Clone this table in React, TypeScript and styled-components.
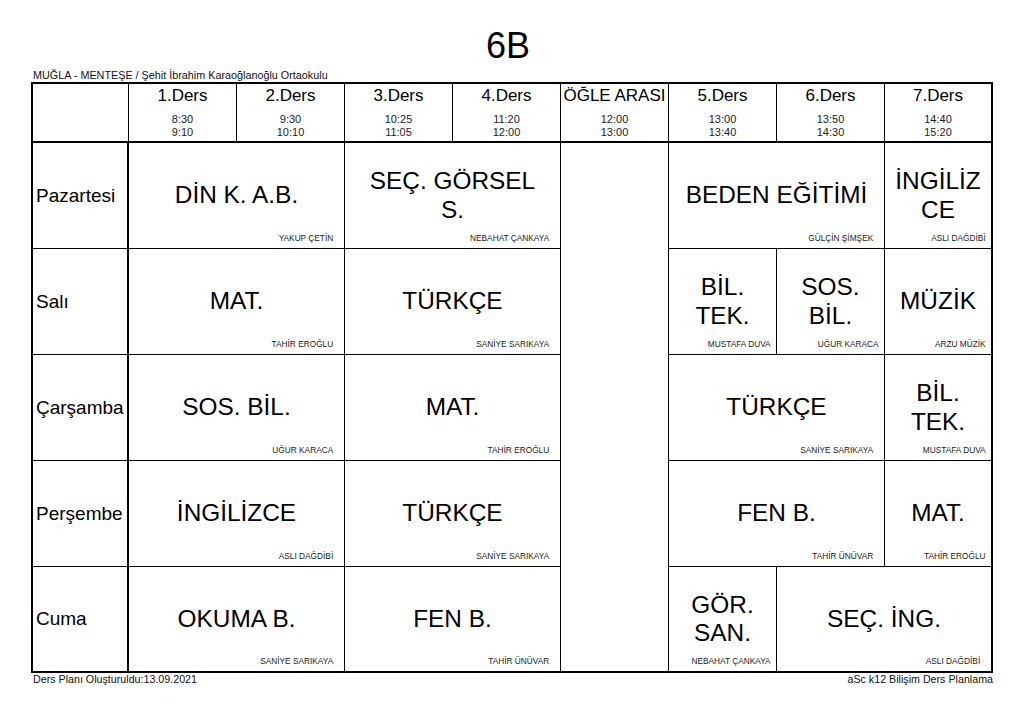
import React from "react";
import styled, { createGlobalStyle } from "styled-components";

const GlobalStyle = createGlobalStyle`
  html, body {
    margin: 0;
    padding: 0;
    background: #ffffff;
  }
  body {
    font-family: "Liberation Sans", Arial, sans-serif;
    color: #000;
  }
  * { box-sizing: border-box; }
`;

const Page = styled.div`
  width: 1024px;
  height: 722px;
  padding: 26px 0 0 31px;
`;

const Sheet = styled.div`
  width: 962px;
`;

const Title = styled.h1`
  margin: 0;
  padding-right: 8px;
  text-align: center;
  font-size: 36px;
  font-weight: 400;
  line-height: 40px;
  color: #000;
`;

const SchoolName = styled.div`
  margin-top: 3px;
  padding-left: 2px;
  font-size: 10.8px;
  line-height: 13px;
  color: #111;
`;

const Timetable = styled.div`
  display: grid;
  grid-template-columns: 96px repeat(8, 108px);
  grid-template-rows: 59px repeat(5, 106px);
  border-top: 2px solid #000;
  border-left: 2px solid #000;
`;

const HeaderCell = styled.div<{ $edge?: boolean }>`
  display: flex;
  flex-direction: column;
  align-items: center;
  padding-top: 2px;
  border-right: ${(p) => (p.$edge ? "2px" : "1px")} solid #000;
  border-bottom: 2px solid #000;
`;

const PeriodName = styled.div`
  font-size: 17px;
  line-height: 20px;
  white-space: nowrap;
  color: #000;
`;

const PeriodTimes = styled.div`
  margin-top: 7px;
  font-size: 11px;
  line-height: 12.5px;
  text-align: center;
  color: #222;
`;

const DayCell = styled.div<{ $bottom?: boolean }>`
  display: flex;
  align-items: center;
  padding-left: 3px;
  font-size: 19px;
  color: #000;
  border-right: 2px solid #000;
  border-bottom: ${(p) => (p.$bottom ? "2px" : "1px")} solid #000;
`;

const LessonCell = styled.div<{ $edge?: boolean; $bottom?: boolean }>`
  display: grid;
  grid-template-columns: 100%;
  grid-template-rows: 100%;
  padding: 0 5%;
  border-right: ${(p) => (p.$edge ? "2px" : "1px")} solid #000;
  border-bottom: ${(p) => (p.$bottom ? "2px" : "1px")} solid #000;
`;

const Subject = styled.div`
  grid-area: 1 / 1;
  align-self: center;
  text-align: center;
  font-size: 24.4px;
  line-height: 1.15;
  overflow-wrap: anywhere;
  color: #000;
`;

const Teacher = styled.div`
  grid-area: 1 / 1;
  align-self: end;
  justify-self: end;
  margin-bottom: 5px;
  font-size: 8.3px;
  line-height: 10px;
  white-space: nowrap;
  color: #222;
`;

const LunchCell = styled.div`
  grid-column: 6;
  grid-row: 2 / span 5;
  border-right: 1px solid #000;
  border-bottom: 2px solid #000;
`;

const Footer = styled.div`
  display: flex;
  justify-content: space-between;
  padding: 0 0 0 2px;
  font-size: 10.7px;
  line-height: 13px;
  color: #111;
`;

type Lesson = { subject: string; teacher: string; period: number; span: number };
type Day = { name: string; lessons: Lesson[] };

const periods = [
  { name: "1.Ders", start: "8:30", end: "9:10" },
  { name: "2.Ders", start: "9:30", end: "10:10" },
  { name: "3.Ders", start: "10:25", end: "11:05" },
  { name: "4.Ders", start: "11:20", end: "12:00" },
  { name: "ÖĞLE ARASI", start: "12:00", end: "13:00" },
  { name: "5.Ders", start: "13:00", end: "13:40" },
  { name: "6.Ders", start: "13:50", end: "14:30" },
  { name: "7.Ders", start: "14:40", end: "15:20" },
];

const days: Day[] = [
  {
    name: "Pazartesi",
    lessons: [
      { subject: "DİN K. A.B.", teacher: "YAKUP ÇETİN", period: 1, span: 2 },
      { subject: "SEÇ. GÖRSEL S.", teacher: "NEBAHAT ÇANKAYA", period: 3, span: 2 },
      { subject: "BEDEN EĞİTİMİ", teacher: "GÜLÇİN ŞİMŞEK", period: 5, span: 2 },
      { subject: "İNGİLİZCE", teacher: "ASLI DAĞDİBİ", period: 7, span: 1 },
    ],
  },
  {
    name: "Salı",
    lessons: [
      { subject: "MAT.", teacher: "TAHİR EROĞLU", period: 1, span: 2 },
      { subject: "TÜRKÇE", teacher: "SANİYE SARIKAYA", period: 3, span: 2 },
      { subject: "BİL. TEK.", teacher: "MUSTAFA DUVA", period: 5, span: 1 },
      { subject: "SOS. BİL.", teacher: "UĞUR KARACA", period: 6, span: 1 },
      { subject: "MÜZİK", teacher: "ARZU MÜZİK", period: 7, span: 1 },
    ],
  },
  {
    name: "Çarşamba",
    lessons: [
      { subject: "SOS. BİL.", teacher: "UĞUR KARACA", period: 1, span: 2 },
      { subject: "MAT.", teacher: "TAHİR EROĞLU", period: 3, span: 2 },
      { subject: "TÜRKÇE", teacher: "SANİYE SARIKAYA", period: 5, span: 2 },
      { subject: "BİL. TEK.", teacher: "MUSTAFA DUVA", period: 7, span: 1 },
    ],
  },
  {
    name: "Perşembe",
    lessons: [
      { subject: "İNGİLİZCE", teacher: "ASLI DAĞDİBİ", period: 1, span: 2 },
      { subject: "TÜRKÇE", teacher: "SANİYE SARIKAYA", period: 3, span: 2 },
      { subject: "FEN B.", teacher: "TAHİR ÜNÜVAR", period: 5, span: 2 },
      { subject: "MAT.", teacher: "TAHİR EROĞLU", period: 7, span: 1 },
    ],
  },
  {
    name: "Cuma",
    lessons: [
      { subject: "OKUMA B.", teacher: "SANİYE SARIKAYA", period: 1, span: 2 },
      { subject: "FEN B.", teacher: "TAHİR ÜNÜVAR", period: 3, span: 2 },
      { subject: "GÖR. SAN.", teacher: "NEBAHAT ÇANKAYA", period: 5, span: 1 },
      { subject: "SEÇ. İNG.", teacher: "ASLI DAĞDİBİ", period: 6, span: 2 },
    ],
  },
];

const gridColumnOf = (period: number) => (period <= 4 ? period + 1 : period + 2);

export default function App() {
  return (
    <>
      <GlobalStyle />
      <Page>
        <Sheet>
          <Title>6B</Title>
          <SchoolName>MUĞLA - MENTEŞE / Şehit İbrahim Karaoğlanoğlu Ortaokulu</SchoolName>
          <Timetable>
            <HeaderCell style={{ gridColumn: 1, gridRow: 1 }} />
            {periods.map((p, i) => (
              <HeaderCell
                key={p.name}
                $edge={i === periods.length - 1}
                style={{ gridColumn: i + 2, gridRow: 1 }}
              >
                <PeriodName>{p.name}</PeriodName>
                <PeriodTimes>
                  {p.start}
                  <br />
                  {p.end}
                </PeriodTimes>
              </HeaderCell>
            ))}
            {days.map((d, r) => {
              const last = r === days.length - 1;
              return (
                <React.Fragment key={d.name}>
                  <DayCell $bottom={last} style={{ gridColumn: 1, gridRow: r + 2 }}>
                    {d.name}
                  </DayCell>
                  {d.lessons.map((l) => {
                    const col = gridColumnOf(l.period);
                    return (
                      <LessonCell
                        key={l.period}
                        $edge={l.period + l.span - 1 === 7}
                        $bottom={last}
                        style={{ gridColumn: `${col} / span ${l.span}`, gridRow: r + 2 }}
                      >
                        <Subject>{l.subject}</Subject>
                        <Teacher>{l.teacher}</Teacher>
                      </LessonCell>
                    );
                  })}
                </React.Fragment>
              );
            })}
            <LunchCell />
          </Timetable>
          <Footer>
            <span>Ders Planı Oluşturuldu:13.09.2021</span>
            <span>aSc k12 Bilişim Ders Planlama</span>
          </Footer>
        </Sheet>
      </Page>
    </>
  );
}
